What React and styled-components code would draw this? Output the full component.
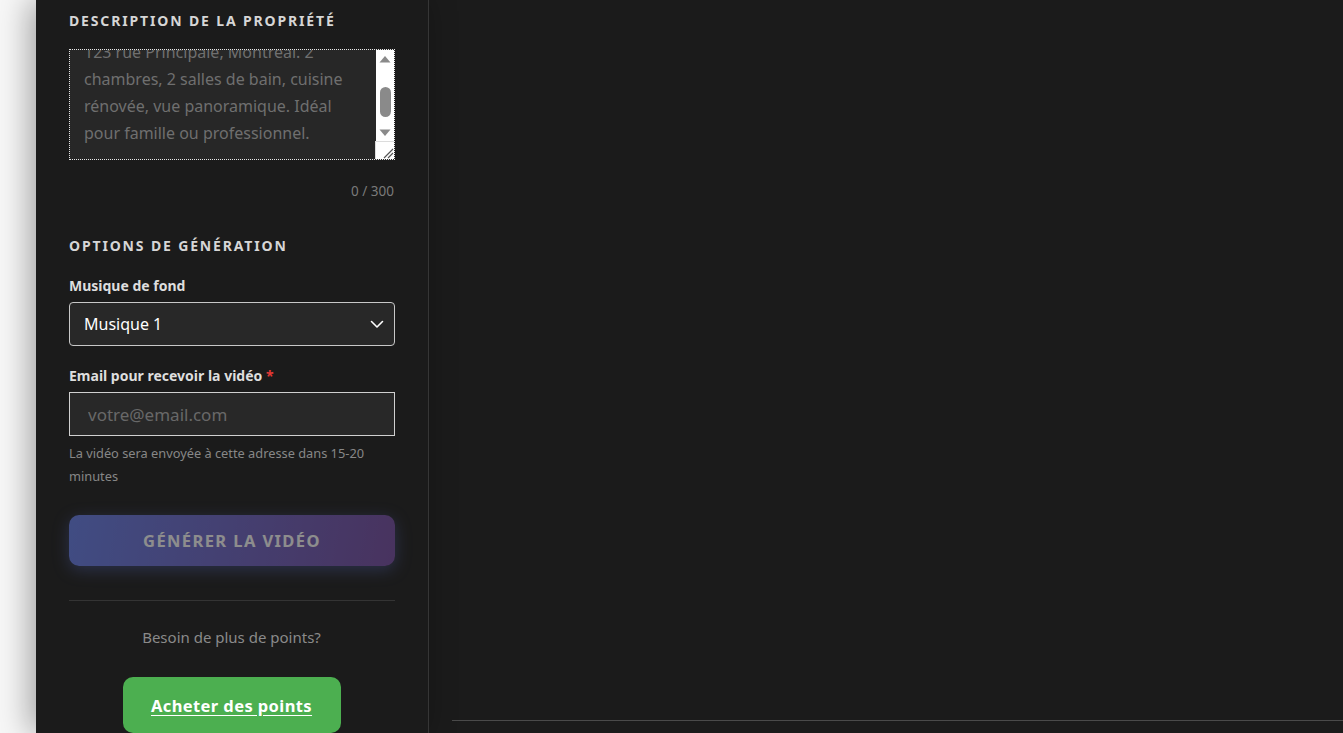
import React, { useEffect, useRef } from "react";
import styled, { createGlobalStyle } from "styled-components";

const GlobalStyle = createGlobalStyle`
  html, body {
    margin: 0;
    padding: 0;
    height: 100%;
    overflow: hidden;
    background: #f7f7f7;
  }
  body {
    font-family: "Noto Sans", "Open Sans", sans-serif;
  }
  #root { height: 100%; }
`;

const Page = styled.div`
  display: flex;
  height: 100vh;
  padding-left: 36px;
  box-sizing: border-box;
`;

const Sidebar = styled.aside`
  width: 393px;
  flex-shrink: 0;
  background: #1b1b1b;
  border-right: 1px solid #363636;
  box-shadow: -6px 0 30px rgba(0, 0, 0, 0.35);
  padding: 11px 34px 0 33px;
  box-sizing: border-box;
  display: flex;
  flex-direction: column;
  overflow: hidden;
  position: relative;
  z-index: 1;
`;

const SectionTitle = styled.h3`
  margin: 0;
  font-size: 14px;
  line-height: 20px;
  font-weight: 700;
  letter-spacing: 1.85px;
  text-transform: uppercase;
  color: #d6d6d6;
  margin-top: ${(p) => p.$top || 0}px;
`;

const AreaBox = styled.div`
  margin-top: 18px;
  width: 326px;
  height: 111px;
  box-sizing: border-box;
  border: 1px dotted #e6e6e6;
  background: #272727;
  display: flex;
`;

const TextArea = styled.textarea`
  flex: 1;
  min-width: 0;
  height: 100%;
  box-sizing: border-box;
  background: transparent;
  border: none;
  outline: none;
  padding: 14px 6px 12px 14px;
  font-family: inherit;
  font-size: 16px;
  line-height: 27px;
  color: #6f6f6f;
  resize: none;
  overflow-y: scroll;
  scrollbar-width: none;
  &::-webkit-scrollbar { display: none; }
`;

const ScrollBar = styled.div`
  width: 18px;
  flex-shrink: 0;
  background: #ffffff;
  display: flex;
  flex-direction: column;
`;

const ArrowButton = styled.div`
  height: 17px;
  display: flex;
  align-items: center;
  justify-content: center;
`;

const Track = styled.div`
  flex: 1;
  padding-top: 20px;
  display: flex;
  justify-content: center;
`;

const Thumb = styled.div`
  width: 11px;
  height: 30px;
  border-radius: 6px;
  background: #8a8a8a;
`;

const Corner = styled.div`
  height: 18px;
  box-sizing: border-box;
  border-top: 1px solid #dcdcdc;
  border-left: 1px solid #dcdcdc;
  margin-left: -1px;
  display: flex;
  align-items: flex-end;
  justify-content: flex-end;
`;

const Counter = styled.div`
  margin-top: 22px;
  text-align: right;
  font-size: 13.5px;
  line-height: 18px;
  color: #7a7a7a;
`;

const Label = styled.label`
  display: block;
  margin-top: ${(p) => p.$top || 20}px;
  font-size: 14px;
  line-height: 20px;
  font-weight: 700;
  color: #dedede;
`;

const Required = styled.span`
  color: #e53935;
`;

const SelectWrap = styled.div`
  margin-top: 6px;
  position: relative;
  width: 326px;
  height: 44px;
`;

const Select = styled.select`
  appearance: none;
  width: 100%;
  height: 100%;
  box-sizing: border-box;
  background: #282828;
  border: 1px solid #c8c8c8;
  border-radius: 4px;
  color: #ffffff;
  font-family: inherit;
  font-size: 16px;
  padding: 0 14px;
  outline: none;
`;

const Chevron = styled.svg`
  position: absolute;
  right: 11px;
  top: 15px;
  pointer-events: none;
`;

const Input = styled.input`
  margin-top: 6px;
  width: 326px;
  height: 44px;
  box-sizing: border-box;
  background: #282828;
  border: 1px solid #d0d0d0;
  border-radius: 0;
  color: #fff;
  font-family: inherit;
  font-size: 17px;
  padding: 0 18px;
  outline: none;

  &::placeholder {
    color: #686868;
  }
`;

const Hint = styled.p`
  margin: 6px 0 0;
  font-size: 12.8px;
  line-height: 23px;
  color: #878787;
`;

const GenerateButton = styled.button`
  margin-top: 27px;
  width: 326px;
  height: 51px;
  border: none;
  border-radius: 10px;
  background: linear-gradient(100deg, #667eea 0%, #764ba2 100%);
  opacity: 0.5;
  box-shadow: 0 4px 16px rgba(102, 126, 234, 0.45);
  color: #ffffff;
  font-family: inherit;
  font-size: 16.5px;
  font-weight: 700;
  letter-spacing: 1.4px;
  text-transform: uppercase;
  cursor: not-allowed;
`;

const Divider = styled.hr`
  margin: 34px 0 0;
  border: none;
  border-top: 1px solid #343434;
  width: 326px;
`;

const MoreText = styled.p`
  margin: 25px 0 0;
  text-align: center;
  font-size: 15px;
  line-height: 22px;
  color: #8a8a8a;
`;

const BuyButton = styled.a`
  align-self: center;
  margin-top: 29px;
  width: 218px;
  height: 56px;
  flex-shrink: 0;
  display: flex;
  align-items: center;
  justify-content: center;
  background: #4caf50;
  border-radius: 10px;
  color: #ffffff;
  font-size: 16.5px;
  font-weight: 700;
  letter-spacing: 0.4px;
  text-decoration: underline;
  text-underline-offset: 3px;
`;

const Main = styled.main`
  flex: 1;
  background: #1b1b1b;
  display: flex;
  flex-direction: column;
  justify-content: flex-end;
  padding-left: 23px;
`;

const Footer = styled.div`
  height: 12px;
  border-top: 1px solid #4a4a4a;
`;

const description =
  "123 rue Principale, Montréal. 2 chambres, 2 salles de bain, cuisine rénovée, vue panoramique. Idéal pour famille ou professionnel.";

export default function App() {
  const areaRef = useRef(null);

  useEffect(() => {
    if (areaRef.current) areaRef.current.scrollTop = 9999;
  }, []);

  return (
    <>
      <GlobalStyle />
      <Page>
        <Sidebar>
          <SectionTitle>Description de la propriété</SectionTitle>
          <AreaBox>
            <TextArea ref={areaRef} defaultValue={description} />
            <ScrollBar>
              <ArrowButton>
                <svg width="12" height="8" viewBox="0 0 12 8">
                  <path d="M0.5 7.5 L6 1 L11.5 7.5 Z" fill="#8a8a8a" />
                </svg>
              </ArrowButton>
              <Track>
                <Thumb />
              </Track>
              <ArrowButton>
                <svg width="12" height="8" viewBox="0 0 12 8">
                  <path d="M0.5 0.5 L6 7 L11.5 0.5 Z" fill="#8a8a8a" />
                </svg>
              </ArrowButton>
              <Corner>
                <svg width="12" height="12" viewBox="0 0 12 12">
                  <path d="M2 11 L11 2 M6 11 L11 6" stroke="#555" strokeWidth="1.2" />
                </svg>
              </Corner>
            </ScrollBar>
          </AreaBox>
          <Counter>0 / 300</Counter>

          <SectionTitle $top={36}>Options de génération</SectionTitle>
          <Label>Musique de fond</Label>
          <SelectWrap>
            <Select defaultValue="1">
              <option value="1">Musique 1</option>
              <option value="2">Musique 2</option>
              <option value="3">Musique 3</option>
            </Select>
            <Chevron width="14" height="14" viewBox="0 0 14 14" fill="none">
              <path d="M1.5 4.5 L7 10 L12.5 4.5" stroke="#ffffff" strokeWidth="1.6" strokeLinecap="round" strokeLinejoin="round" />
            </Chevron>
          </SelectWrap>

          <Label>
            Email pour recevoir la vidéo <Required>*</Required>
          </Label>
          <Input type="email" placeholder="votre@email.com" />
          <Hint>La vidéo sera envoyée à cette adresse dans 15-20 minutes</Hint>

          <GenerateButton disabled>Générer la vidéo</GenerateButton>

          <Divider />
          <MoreText>Besoin de plus de points?</MoreText>
          <BuyButton href="#">Acheter des points</BuyButton>
        </Sidebar>
        <Main>
          <Footer />
        </Main>
      </Page>
    </>
  );
}
